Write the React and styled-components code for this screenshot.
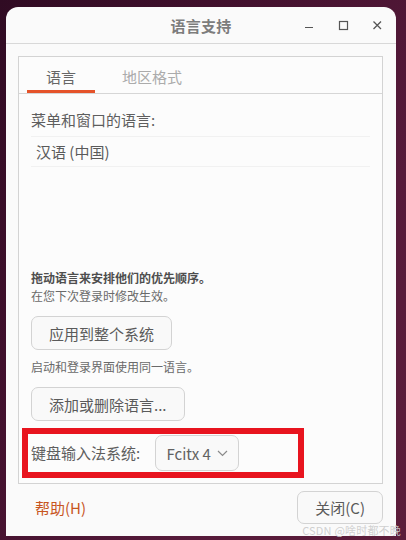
import React from "react";
import styled, { createGlobalStyle } from "styled-components";

const Global = createGlobalStyle`
  html, body { margin: 0; padding: 0; }
  body {
    width: 406px;
    height: 540px;
    overflow: hidden;
    background: linear-gradient(120deg, #300b23 0%, #43112e 35%, #561a3a 70%, #5c1d3a 100%);
    font-family: "Noto Sans CJK SC", "Noto Sans", sans-serif;
  }
  * { box-sizing: border-box; }
`;

const Page = styled.div`
  position: relative;
  height: 540px;
  padding: 7px 10px 4px 6px;
`;

const Window = styled.div`
  width: 390px;
  height: 529px;
  background: #fafafa;
  border-radius: 12px 12px 0 0;
  display: flex;
  flex-direction: column;
  overflow: hidden;
  color: #5c5c5c;
`;

const Header = styled.div`
  height: 37px;
  flex: none;
  border-bottom: 1px solid #d8d8d8;
  display: grid;
  grid-template-columns: 1fr auto 1fr;
  align-items: center;
`;

const Title = styled.div`
  grid-column: 2;
  font-size: 15px;
  font-weight: 700;
  color: #7d7d7d;
  letter-spacing: 0.3px;
`;

const Controls = styled.div`
  grid-column: 3;
  justify-self: end;
  display: flex;
  gap: 10px;
  padding-right: 7px;
`;

const CtrlBtn = styled.div`
  width: 24px;
  height: 24px;
  display: flex;
  align-items: center;
  justify-content: center;
`;

const Body = styled.div`
  flex: none;
  padding: 12px 13px 0 12px;
`;

const Notebook = styled.div`
  height: 428px;
  border: 1px solid #d3d3d3;
  background: #fcfcfc;
  display: flex;
  flex-direction: column;
`;

const TabBar = styled.div`
  height: 37px;
  flex: none;
  border-bottom: 1px solid #d6d6d6;
  display: flex;
  gap: 8px;
  padding-left: 8px;
`;

const Tab = styled.div`
  height: 100%;
  padding: 2px 19px 0;
  display: flex;
  align-items: center;
  font-size: 15px;
  color: ${(p) => (p.$active ? "#666666" : "#ababab")};
  box-shadow: ${(p) => (p.$active ? "inset 0 -3px 0 #e5532a" : "none")};
`;

const Content = styled.div`
  flex: 1;
  display: flex;
  flex-direction: column;
  padding: 16px 12px 5px 12px;
`;

const Label = styled.div`
  font-size: 15px;
  line-height: 20px;
  color: #5e5e5e;
  white-space: nowrap;
`;

const List = styled.div`
  flex: 1;
  margin-top: 6px;
  border-top: 1px solid #f1f1f1;
`;

const ListRow = styled.div`
  height: 30px;
  border-bottom: 1px solid #f1f1f1;
  padding-left: 5px;
  display: flex;
  align-items: center;
  font-size: 15px;
  color: #5a5a5a;
`;

const Note = styled.div`
  font-size: 12px;
  line-height: ${(p) => (p.$lh || 18)}px;
  font-weight: ${(p) => (p.$bold ? 700 : 400)};
  color: ${(p) => (p.$bold ? "#4e4e4e" : "#6a6a6a")};
  margin-top: ${(p) => p.$mt || 0}px;
`;

const Button = styled.div`
  align-self: flex-start;
  height: ${(p) => p.$h || 34}px;
  margin-top: ${(p) => p.$mt || 0}px;
  padding: 0 17px;
  display: inline-flex;
  align-items: center;
  justify-content: center;
  gap: 5px;
  border: 1px solid #d3d3d3;
  border-radius: 7px;
  background: #f9f9f9;
  font-size: 15px;
  color: #5a5a5a;
  white-space: nowrap;
`;

const Highlight = styled.div`
  margin-top: 7px;
  margin-left: -9px;
  width: 282px;
  height: 50px;
  border: 6px solid #e8141f;
  padding-left: 3px;
  display: flex;
  align-items: center;
  gap: 15px;
`;

const Dropdown = styled(Button)`
  align-self: center;
  height: 36px;
  width: 84px;
  padding: 0 8px;
  gap: 6px;
  font-size: 15px;
  color: #626262;
`;

const Footer = styled.div`
  flex: 1;
  display: flex;
  justify-content: space-between;
  align-items: flex-start;
  padding: 7px 13px 0 12px;
`;

const LinkButton = styled.div`
  height: 33px;
  padding: 0 17px;
  display: flex;
  align-items: center;
  font-size: 15px;
  color: #c8561f;
`;

const Watermark = styled.div`
  position: absolute;
  right: 5px;
  bottom: 3px;
  font-size: 11px;
  line-height: 13px;
  color: rgba(205, 205, 205, 0.95);
  letter-spacing: 0.2px;
`;

const Chevron = () => (
  <svg width="11" height="7" viewBox="0 0 11 7">
    <polyline points="1,1 5.5,5.5 10,1" fill="none" stroke="#8a8a8a" strokeWidth="1.2" />
  </svg>
);

export default function App() {
  return (
    <>
      <Global />
      <Page>
        <Window>
          <Header>
            <Title>语言支持</Title>
            <Controls>
              <CtrlBtn>
                <svg width="16" height="16" viewBox="0 0 16 16">
                  <line x1="4" y1="10.5" x2="12" y2="10.5" stroke="#555" strokeWidth="1.2" />
                </svg>
              </CtrlBtn>
              <CtrlBtn>
                <svg width="16" height="16" viewBox="0 0 16 16">
                  <rect x="4.5" y="4.5" width="8" height="8" fill="none" stroke="#555" strokeWidth="1.2" />
                </svg>
              </CtrlBtn>
              <CtrlBtn>
                <svg width="16" height="16" viewBox="0 0 16 16">
                  <path d="M4.5 4.5 L12 12 M12 4.5 L4.5 12" stroke="#555" strokeWidth="1.3" fill="none" />
                </svg>
              </CtrlBtn>
            </Controls>
          </Header>
          <Body>
            <Notebook>
              <TabBar>
                <Tab $active>语言</Tab>
                <Tab>地区格式</Tab>
              </TabBar>
              <Content>
                <Label>菜单和窗口的语言:</Label>
                <List>
                  <ListRow>汉语 (中国)</ListRow>
                </List>
                <Note $bold>拖动语言来安排他们的优先顺序。</Note>
                <Note>在您下次登录时修改生效。</Note>
                <Button $mt={11}>应用到整个系统</Button>
                <Note $lh={16} $mt={9}>启动和登录界面使用同一语言。</Note>
                <Button $mt={12}>添加或删除语言...</Button>
                <Highlight>
                  <Label>键盘输入法系统:</Label>
                  <Dropdown>
                    Fcitx 4 <Chevron />
                  </Dropdown>
                </Highlight>
              </Content>
            </Notebook>
          </Body>
          <Footer>
            <LinkButton>帮助(H)</LinkButton>
            <Button $h={33}>关闭(C)</Button>
          </Footer>
        </Window>
        <Watermark>CSDN @啥时都不晚</Watermark>
      </Page>
    </>
  );
}
